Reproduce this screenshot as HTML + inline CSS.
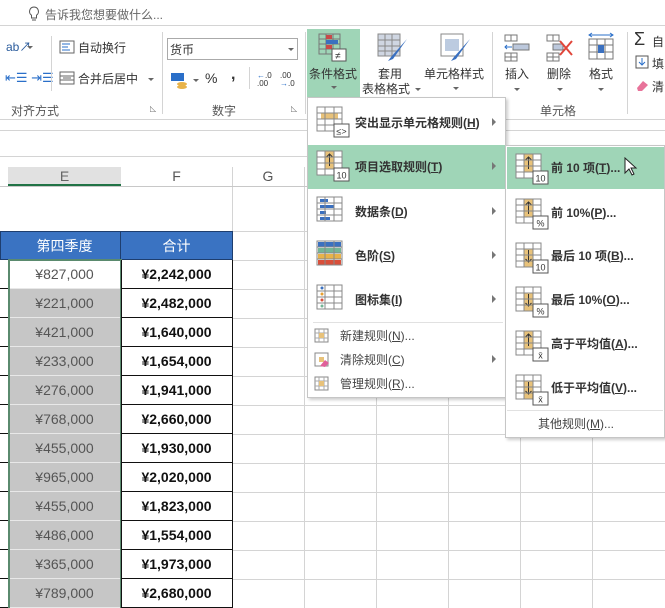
<!DOCTYPE html>
<html><head><meta charset="utf-8"><style>
*{margin:0;padding:0;box-sizing:border-box}
body{width:665px;height:608px;overflow:hidden;background:#fff;font-family:"Liberation Sans","Noto Sans CJK SC",sans-serif;font-size:12px;color:#444;position:relative}
.a{position:absolute;white-space:nowrap}
.vl{position:absolute;width:1px;background:#d4d4d4}
.hl{position:absolute;height:1px;background:#d4d4d4}
.cell{position:absolute;text-align:center;font-size:14px;line-height:29px;color:#555}
.fb{font-weight:bold;color:#111}
.mi{position:absolute;font-size:12px;color:#333;font-weight:bold}
.mn{position:absolute;font-size:12px;color:#444}
.arr{position:absolute;width:0;height:0;border-top:4px solid transparent;border-bottom:4px solid transparent;border-left:4px solid #777}
.dd{position:absolute;width:0;height:0;border-left:3px solid transparent;border-right:3px solid transparent;border-top:3px solid #666}
u{text-decoration:underline}
</style></head><body>

<svg class="a" style="left:28px;top:6px" width="12" height="16"><path d="M6 1a4.5 4.5 0 0 0-2.5 8.2V12h5V9.2A4.5 4.5 0 0 0 6 1z" fill="none" stroke="#555"/><path d="M4 14h4" stroke="#555"/></svg>
<div class="a" style="left:45px;top:6px;color:#666;font-size:12px">告诉我您想要做什么...</div>
<div class="hl" style="left:0;top:25px;width:665px"></div>

<div class="a" style="left:6px;top:38px;font-size:12px;color:#2a5b9c">ab↗</div><div class="dd" style="left:27px;top:46px"></div>
<div class="a" style="left:5px;top:70px;font-size:13px;color:#2a6fc9">⇤☰ ⇥☰</div>
<div class="vl" style="left:51px;top:36px;height:55px"></div>
<svg class="a" style="left:59px;top:40px" width="16" height="14"><rect x="1" y="1" width="14" height="12" fill="none" stroke="#666"/><path d="M3 4h8M3 7h6M3 10h8" stroke="#2a6fc9"/></svg>
<div class="a" style="left:78px;top:39px;color:#333">自动换行</div>
<svg class="a" style="left:59px;top:71px" width="16" height="14"><rect x="1" y="1" width="14" height="12" fill="none" stroke="#666"/><path d="M1 5h14M1 9h14M4 7h8" stroke="#666"/></svg>
<div class="a" style="left:78px;top:70px;color:#333">合并后居中</div><div class="dd" style="left:148px;top:78px"></div>
<div class="a" style="left:11px;top:102px;color:#555">对齐方式</div>
<div class="a" style="left:150px;top:104px;font-size:8px;color:#777">◺</div>
<div class="vl" style="left:162px;top:32px;height:82px"></div>
<div class="a" style="left:167px;top:38px;width:131px;height:22px;border:1px solid #aaa;background:#fff"></div>
<div class="a" style="left:170px;top:41px;color:#333">货币</div><div class="dd" style="left:288px;top:48px"></div>
<svg class="a" style="left:170px;top:71px" width="20" height="18"><rect x="1" y="2" width="13" height="8" fill="#2a6fc9"/><ellipse cx="12" cy="13" rx="5" ry="2" fill="#e8b34a"/><ellipse cx="12" cy="16" rx="5" ry="2" fill="#e8b34a"/></svg>
<div class="dd" style="left:193px;top:79px"></div>
<div class="a" style="left:205px;top:70px;font-size:14px;color:#333">%</div>
<div class="a" style="left:231px;top:66px;font-size:16px;color:#333;font-weight:bold">,</div>
<div class="vl" style="left:249px;top:67px;height:22px"></div>
<div class="a" style="left:257px;top:72px;font-size:8px;line-height:8px;color:#333"><span style="color:#2a6fc9">←</span>.0<br>.00</div>
<div class="a" style="left:280px;top:72px;font-size:8px;line-height:8px;color:#333">.00<br><span style="color:#2a6fc9">→</span>.0</div>
<div class="a" style="left:212px;top:102px;color:#555">数字</div>
<div class="a" style="left:291px;top:104px;font-size:8px;color:#777">◺</div>
<div class="vl" style="left:305px;top:32px;height:82px"></div>

<div class="a" style="left:307px;top:29px;width:53px;height:68px;background:#9fd5b7"></div>
<svg class="a" style="left:318px;top:33px" width="30" height="30"><g fill="none" stroke="#777"><rect x="1" y="1" width="21" height="20"/><path d="M8 1v20M15 1v20M1 6h21M1 11h21M1 16h21"/></g><rect x="8" y="2" width="6" height="4" fill="#c84a4a"/><rect x="8" y="7" width="12" height="4" fill="#3a70c0"/><rect x="8" y="12" width="6" height="4" fill="#c84a4a"/><rect x="14" y="16" width="14" height="12" fill="#fff" stroke="#555"/><text x="17" y="26" font-size="10" fill="#333">≠</text></svg>
<div class="a" style="left:309px;top:65px;color:#333">条件格式</div><div class="dd" style="left:331px;top:86px"></div>
<svg class="a" style="left:377px;top:33px" width="32" height="30"><g fill="#cfd6e2" stroke="#888"><rect x="1" y="1" width="22" height="22"/></g><path d="M1 7h22M1 13h22M1 18h22M8 1v22M15 1v22" stroke="#888" fill="none"/><path d="M30 6L14 24l-3 4 5-2z" fill="#3a70c0"/></svg>
<div class="a" style="left:378px;top:65px;color:#333">套用</div>
<div class="a" style="left:362px;top:80px;color:#333">表格格式</div><div class="dd" style="left:415px;top:88px"></div>
<svg class="a" style="left:440px;top:33px" width="32" height="30"><rect x="1" y="1" width="22" height="22" fill="#fff" stroke="#888"/><rect x="5" y="6" width="14" height="12" fill="#bccbe0"/><path d="M30 6L14 24l-3 4 5-2z" fill="#3a70c0"/></svg>
<div class="a" style="left:424px;top:65px;color:#333">单元格样式</div><div class="dd" style="left:453px;top:87px"></div>
<div class="vl" style="left:492px;top:32px;height:82px"></div>
<svg class="a" style="left:503px;top:33px" width="28" height="30"><g fill="none" stroke="#777"><rect x="2" y="2" width="12" height="6"/><rect x="2" y="20" width="12" height="8"/><path d="M8 2v6M8 20v8M2 24h12"/></g><rect x="10" y="11" width="16" height="6" fill="#bcc8dc" stroke="#777"/><path d="M2 14h7M4 12l-2 2 2 2" stroke="#2a6fc9" fill="none"/></svg>
<div class="a" style="left:505px;top:65px;color:#333">插入</div><div class="dd" style="left:514px;top:88px"></div>
<svg class="a" style="left:545px;top:33px" width="28" height="30"><g fill="none" stroke="#777"><rect x="2" y="2" width="12" height="6"/><rect x="2" y="20" width="12" height="8"/><path d="M8 2v6M8 20v8M2 24h12"/></g><rect x="8" y="11" width="10" height="6" fill="#bcc8dc" stroke="#777"/><path d="M15 8l12 14M27 8L15 22" stroke="#e0463a" stroke-width="2"/></svg>
<div class="a" style="left:547px;top:65px;color:#333">删除</div><div class="dd" style="left:557px;top:88px"></div>
<svg class="a" style="left:587px;top:32px" width="28" height="32"><path d="M2 3h24M5 1l-3 2 3 2M23 1l3 2-3 2" stroke="#2a6fc9" fill="none"/><g fill="none" stroke="#777"><rect x="2" y="7" width="24" height="20"/><path d="M10 7v20M18 7v20M2 13h24M2 20h24"/></g><rect x="11" y="13" width="6" height="8" fill="#3a70c0"/></svg>
<div class="a" style="left:589px;top:65px;color:#333">格式</div><div class="dd" style="left:598px;top:88px"></div>
<div class="a" style="left:540px;top:102px;color:#555">单元格</div>
<div class="vl" style="left:627px;top:32px;height:82px"></div>
<div class="a" style="left:634px;top:29px;font-size:18px;color:#333">Σ</div><div class="a" style="left:652px;top:33px;color:#333">自</div>
<svg class="a" style="left:635px;top:55px" width="14" height="14"><rect x="1" y="1" width="12" height="12" fill="#fff" stroke="#555"/><path d="M7 3v7M4 7l3 3 3-3" stroke="#2a6fc9" fill="none"/></svg><div class="a" style="left:652px;top:55px;color:#333">填</div>
<svg class="a" style="left:635px;top:78px" width="14" height="14"><path d="M2 10l6-7 5 4-6 6H3z" fill="#e8739a"/></svg><div class="a" style="left:652px;top:78px;color:#333">清</div>
<div class="hl" style="left:0;top:119px;width:665px"></div>
<div class="hl" style="left:0;top:130px;width:665px"></div>
<div class="hl" style="left:0;top:156px;width:665px"></div>

<div class="a" style="left:8px;top:167px;width:113px;height:19px;background:#e1e1e1;border-bottom:2px solid #217346"></div>
<div class="a" style="left:8px;top:167px;width:113px;text-align:center;font-size:14px;color:#666;line-height:19px">E</div>
<div class="a" style="left:121px;top:167px;width:111px;text-align:center;font-size:14px;color:#555;line-height:19px">F</div>
<div class="a" style="left:232px;top:167px;width:72px;text-align:center;font-size:14px;color:#555;line-height:19px">G</div>
<div class="vl" style="left:232px;top:167px;height:441px"></div>
<div class="vl" style="left:304px;top:167px;height:441px"></div>
<div class="vl" style="left:376px;top:397px;height:211px"></div>
<div class="vl" style="left:448px;top:397px;height:211px"></div>
<div class="vl" style="left:520px;top:437px;height:171px"></div>
<div class="vl" style="left:592px;top:437px;height:171px"></div>
<div class="hl" style="left:0;top:186px;width:665px;background:#c8c8c8"></div>
<div class="hl" style="left:232px;top:231px;width:433px"></div>
<div class="hl" style="left:232px;top:260px;width:433px"></div>
<div class="hl" style="left:232px;top:289px;width:433px"></div>
<div class="hl" style="left:232px;top:318px;width:433px"></div>
<div class="hl" style="left:232px;top:347px;width:433px"></div>
<div class="hl" style="left:232px;top:376px;width:433px"></div>
<div class="hl" style="left:232px;top:405px;width:433px"></div>
<div class="hl" style="left:232px;top:434px;width:433px"></div>
<div class="hl" style="left:232px;top:463px;width:433px"></div>
<div class="hl" style="left:232px;top:492px;width:433px"></div>
<div class="hl" style="left:232px;top:521px;width:433px"></div>
<div class="hl" style="left:232px;top:550px;width:433px"></div>
<div class="hl" style="left:232px;top:579px;width:433px"></div>

<div class="a" style="left:0;top:231px;width:233px;height:29px;background:#3a73c2;border:1px solid #1e3e6e"></div>
<div class="vl" style="left:120px;top:231px;height:29px;background:#1e3e6e"></div>
<div class="a" style="left:8px;top:236px;width:113px;text-align:center;color:#fff;font-size:14px">第四季度</div>
<div class="a" style="left:121px;top:236px;width:111px;text-align:center;color:#fff;font-size:14px">合计</div>
<div class="a" style="left:8px;top:289px;width:113px;height:319px;background:#c6c6c6"></div>
<div id="rows"></div>
<div class="a" style="left:0;top:260px;width:233px;height:348px;border-right:1px solid #111"></div>
<div class="a" style="left:8px;top:259px;width:114px;height:349px;border:2px solid #5a8a6e;border-bottom:none"></div>
<div class="vl" style="left:121px;top:260px;height:348px;background:#111"></div>

<div class="a" style="left:307px;top:97px;width:199px;height:301px;background:#fff;border:1px solid #c6c6c6;box-shadow:2px 2px 3px rgba(0,0,0,.2)"></div>
<div class="a" style="left:308px;top:145px;width:197px;height:44px;background:#9fd5b7"></div>
<div class="hl" style="left:313px;top:322px;width:190px;background:#e1e1e1"></div>

<div class="a" style="left:505px;top:145px;width:160px;height:293px;background:#fff;border:1px solid #c6c6c6;box-shadow:2px 2px 3px rgba(0,0,0,.2)"></div>
<div class="a" style="left:507px;top:147px;width:157px;height:42px;background:#9fd5b7"></div>
<div class="hl" style="left:507px;top:410px;width:156px;background:#e1e1e1"></div>

<script>
var d=[["¥827,000","¥2,242,000"],["¥221,000","¥2,482,000"],["¥421,000","¥1,640,000"],["¥233,000","¥1,654,000"],["¥276,000","¥1,941,000"],["¥768,000","¥2,660,000"],["¥455,000","¥1,930,000"],["¥965,000","¥2,020,000"],["¥455,000","¥1,823,000"],["¥486,000","¥1,554,000"],["¥365,000","¥1,973,000"],["¥789,000","¥2,680,000"]];
var h="";
for(var i=0;i<d.length;i++){var y=260+29*i;
h+='<div class="cell" style="left:8px;top:'+y+'px;width:113px">'+d[i][0]+'</div>';
h+='<div class="cell fb" style="left:121px;top:'+y+'px;width:111px">'+d[i][1]+'</div>';
h+='<div class="hl" style="left:0;top:'+(y+28)+'px;width:8px;background:#111"></div>';
h+='<div class="hl" style="left:10px;top:'+(y+28)+'px;width:110px;background:#e8e8e8"></div>';
h+='<div class="hl" style="left:121px;top:'+(y+28)+'px;width:112px;background:#111"></div>';
}
document.getElementById("rows").outerHTML=h;
function grid(x,y,fill,badge,extra){
return '<svg class="a" style="left:'+x+'px;top:'+y+'px" width="34" height="32"><rect x="1" y="1" width="25" height="24" fill="#fff" stroke="#888"/>'+(extra||'')+'<g fill="none" stroke="#888"><rect x="1" y="1" width="25" height="24"/><path d="M9 1v24M18 1v24M1 7h25M1 13h25M1 19h25"/></g>'+(badge?'<rect x="18" y="18" width="15" height="13" fill="#fff" stroke="#555"/><text x="25.5" y="28.5" font-size="9" text-anchor="middle" fill="#333" font-family="Liberation Sans">'+badge+'</text>':'')+'</svg>';}
var up='<rect x="9" y="1" width="9" height="18" fill="#e8c27a"/><path d="M13.5 16V4M10.5 7l3-3 3 3" stroke="#333" fill="none"/>';
var dn='<rect x="9" y="7" width="9" height="18" fill="#e8c27a"/><path d="M13.5 8v12M10.5 17l3 3 3-3" stroke="#333" fill="none"/>';
var m='';
m+=grid(316,106,0,'≤>','<rect x="5" y="7" width="17" height="6" fill="#e8c27a"/>');
m+=grid(316,150,0,'10',up);
m+=grid(316,196,0,'','<rect x="4" y="3" width="8" height="3" fill="#3a70c0"/><rect x="4" y="9" width="14" height="3" fill="#3a70c0"/><rect x="4" y="15" width="6" height="3" fill="#3a70c0"/><rect x="4" y="21" width="10" height="3" fill="#3a70c0"/>');
m+=grid(316,240,0,'','<rect x="2" y="2" width="23" height="5" fill="#3a70c0"/><rect x="2" y="8" width="23" height="5" fill="#74b596"/><rect x="2" y="14" width="23" height="5" fill="#e8b34a"/><rect x="2" y="20" width="23" height="5" fill="#d94f3a"/>');
m+=grid(316,284,0,'','<circle cx="6" cy="4" r="1.5" fill="#3a70c0"/><circle cx="6" cy="10" r="1.5" fill="#e8a030"/><circle cx="6" cy="16" r="1.5" fill="#d94f3a"/><circle cx="6" cy="22" r="1.5" fill="#74b596"/>');
m+='<svg class="a" style="left:314px;top:328px" width="16" height="16"><rect x="1" y="1" width="13" height="13" fill="#fff" stroke="#888"/><path d="M1 5h13M1 10h13M5 1v13M10 1v13" stroke="#aaa"/><rect x="5" y="5" width="5" height="5" fill="#e8c27a"/></svg>';
m+='<svg class="a" style="left:314px;top:352px" width="16" height="16"><rect x="1" y="1" width="13" height="13" fill="#fff" stroke="#888"/><rect x="5" y="5" width="5" height="5" fill="#e8c27a"/><path d="M6 14l5-6 4 3-4 4z" fill="#e0609a"/></svg>';
m+='<svg class="a" style="left:314px;top:376px" width="16" height="16"><rect x="1" y="1" width="13" height="13" fill="#fff" stroke="#888"/><path d="M1 5h13M1 10h13M5 1v13M10 1v13" stroke="#aaa"/><rect x="5" y="5" width="5" height="5" fill="#e8c27a"/></svg>';
m+=grid(515,153,0,'10',up);
m+=grid(515,198,0,'%',up);
m+=grid(515,242,0,'10',dn);
m+=grid(515,286,0,'%',dn);
m+=grid(515,330,0,'x̄',up);
m+=grid(515,374,0,'x̄',dn);
document.body.insertAdjacentHTML('beforeend',m);
</script>

<div class="mi" style="left:355px;top:114px">突出显示单元格规则(<u>H</u>)</div><div class="arr" style="left:492px;top:118px"></div>
<div class="mi" style="left:355px;top:158px">项目选取规则(<u>T</u>)</div><div class="arr" style="left:492px;top:162px"></div>
<div class="mi" style="left:355px;top:203px">数据条(<u>D</u>)</div><div class="arr" style="left:492px;top:207px"></div>
<div class="mi" style="left:355px;top:247px">色阶(<u>S</u>)</div><div class="arr" style="left:492px;top:251px"></div>
<div class="mi" style="left:355px;top:291px">图标集(<u>I</u>)</div><div class="arr" style="left:492px;top:295px"></div>
<div class="mn" style="left:340px;top:327px">新建规则(<u>N</u>)...</div>
<div class="mn" style="left:340px;top:351px">清除规则(<u>C</u>)</div><div class="arr" style="left:492px;top:355px"></div>
<div class="mn" style="left:340px;top:375px">管理规则(<u>R</u>)...</div>

<div class="mi" style="left:551px;top:159px">前 10 项(<u>T</u>)...</div>
<div class="mi" style="left:551px;top:204px">前 10%(<u>P</u>)...</div>
<div class="mi" style="left:551px;top:247px">最后 10 项(<u>B</u>)...</div>
<div class="mi" style="left:551px;top:291px">最后 10%(<u>O</u>)...</div>
<div class="mi" style="left:551px;top:335px">高于平均值(<u>A</u>)...</div>
<div class="mi" style="left:551px;top:379px">低于平均值(<u>V</u>)...</div>
<div class="mn" style="left:538px;top:415px">其他规则(<u>M</u>)...</div>

<svg class="a" style="left:624px;top:157px" width="14" height="20"><path d="M1 1v15l4-4 3 6 2-1-3-6h5z" fill="#fff" stroke="#222"/></svg>
</body></html>
